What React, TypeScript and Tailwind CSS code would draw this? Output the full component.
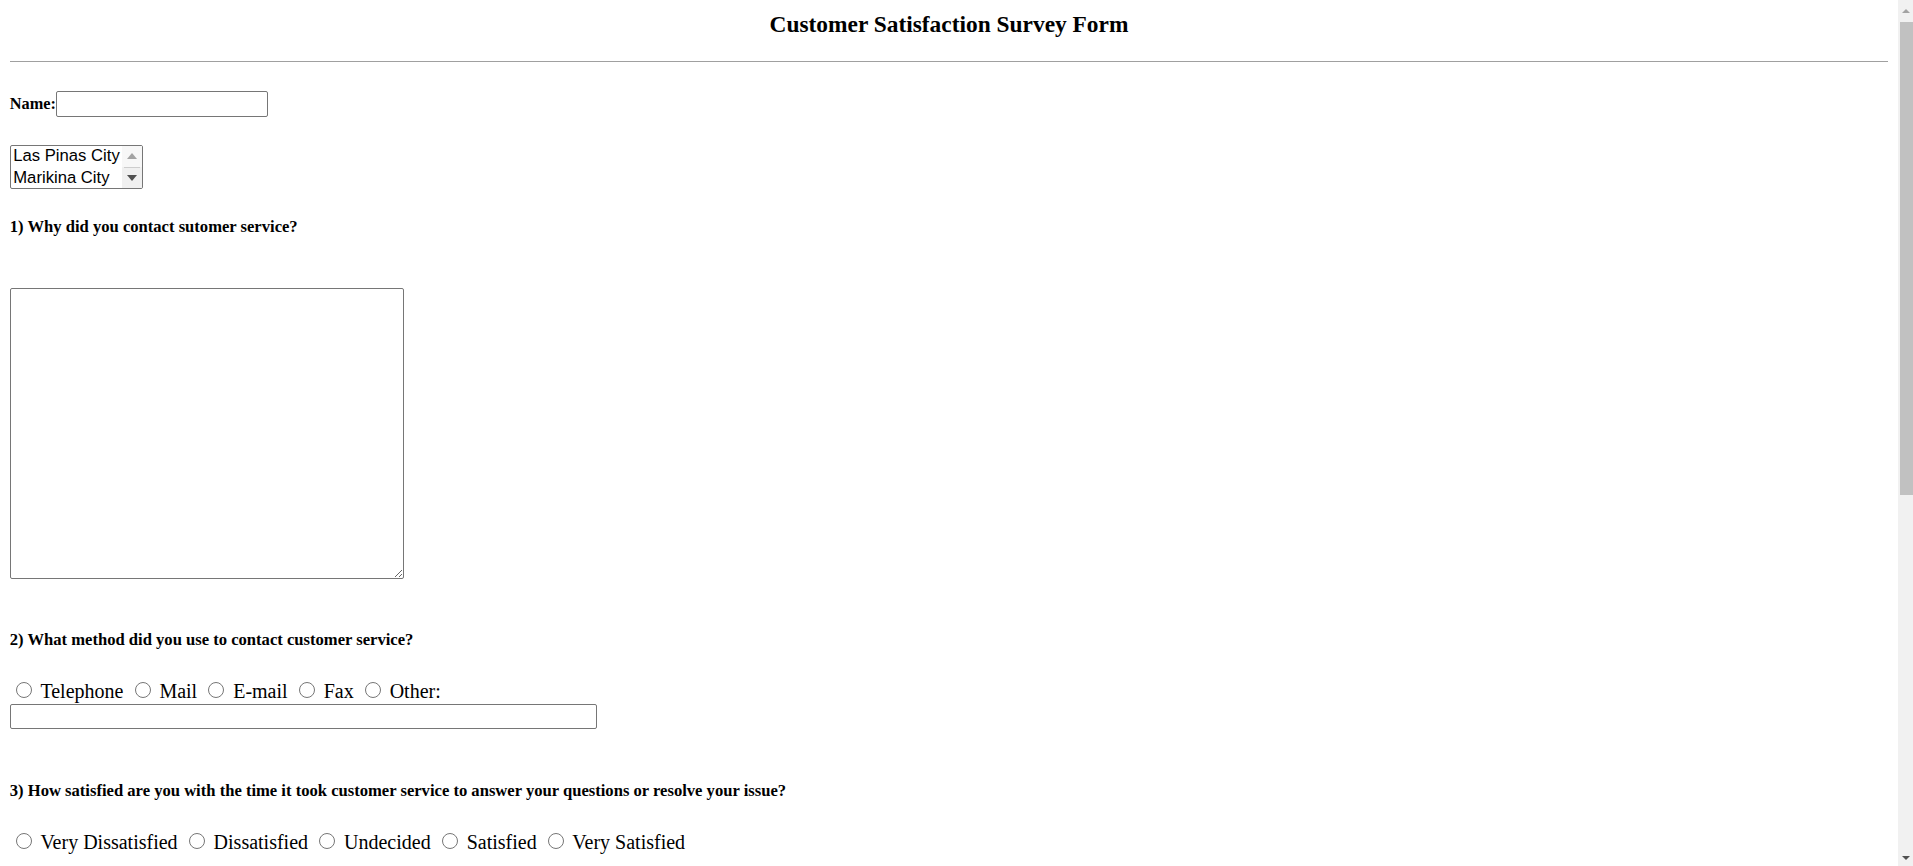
import { Fragment } from 'react';

const methods = ['Telephone', 'Mail', 'E-mail', 'Fax', 'Other:'];
const ratings = ['Very Dissatisfied', 'Dissatisfied', 'Undecided', 'Satisfied', 'Very Satisfied'];

function RadioLine({ name, options }: { name: string; options: string[] }) {
  return (
    <div className="h-[24px] text-[20px] leading-[22px]">
      {options.map((o) => (
        <Fragment key={o}>
          <input
            type="radio"
            name={name}
            className="ml-[6.25px] mr-[3.75px] mt-[3.75px] h-[16px] w-[16px]"
          />{' '}
          {o}{' '}
        </Fragment>
      ))}
    </div>
  );
}

function PageScrollbar() {
  return (
    <div aria-hidden className="flex h-full w-[15px] flex-col bg-[#f1f1f1]">
      <div className="flex h-[22px] items-center justify-center">
        <svg width="8" height="4" viewBox="0 0 8 4">
          <path d="M0 4 L4 0 L8 4z" fill="#a3a3a3" />
        </svg>
      </div>
      <div className="ml-[2px] h-[473px] bg-[#c1c1c1]" />
      <div className="flex-1" />
      <div className="flex h-[17px] items-center justify-center">
        <svg width="8" height="4" viewBox="0 0 8 4">
          <path d="M0 0 L8 0 L4 4z" fill="#505050" />
        </svg>
      </div>
    </div>
  );
}

export default function App() {
  return (
    <div className="flex h-screen overflow-hidden bg-white">
      <main className="min-w-0 flex-1 px-[9.76px] font-['Liberation_Serif',serif] text-black">
        {/* Title */}
        <h3 className="pt-[11.4px] text-center text-[23.4px] font-bold leading-[26px]">
          Customer Satisfaction Survey Form
        </h3>
        <hr className="mt-[23.6px] border-t border-[#a0a0a0]" />

        {/* Name */}
        <div className="mt-[29px] flex h-[26px] items-center">
          <label className="text-[16.3px] font-bold leading-[18px]">Name:</label>
          <input type="text" className="h-[26px] w-[212px] rounded-[2px] border border-[#767676] bg-white" />
        </div>

        {/* City list */}
        <div
          role="listbox"
          className="mt-[28px] flex h-[44.3px] w-[133.4px] overflow-hidden rounded-[2px] border border-[#767676] font-['Liberation_Sans',Arial,sans-serif] text-[16.67px]"
        >
          <div className="flex-1 pl-[2.5px]">
            <div className="h-[22px] leading-[19px]">Las Pinas City</div>
            <div className="h-[22px] leading-[19px]">Marikina City</div>
          </div>
          <div className="flex w-[20px] flex-col bg-[#f0f0f0]">
            <div className="flex flex-1 items-center justify-center bg-[#f7f7f7]">
              <svg width="10" height="6" viewBox="0 0 10 6">
                <path d="M0 6 L5 0 L10 6z" fill="#a3a3a3" />
              </svg>
            </div>
            <div className="mx-[2px] h-px bg-[#cdcdcd]" />
            <div className="flex flex-1 items-center justify-center">
              <svg width="10" height="6" viewBox="0 0 10 6">
                <path d="M0 0 L10 0 L5 6z" fill="#505050" />
              </svg>
            </div>
          </div>
        </div>

        {/* Question 1 */}
        <h5 className="mt-[29.2px] text-[16.6px] font-bold leading-[18px]">1) Why did you contact sutomer service?</h5>
        <textarea className="mt-[51.5px] block h-[291px] w-[394px] rounded-[2px] border border-[#767676]" />

        {/* Question 2 */}
        <h5 className="mt-[52.5px] text-[16.6px] font-bold leading-[18px]">
          2) What method did you use to contact customer service?
        </h5>
        <div className="mt-[29px]">
          <RadioLine name="method" options={methods} />
        </div>
        <input type="text" className="mt-[2px] block h-[25px] w-[587px] rounded-[2px] border border-[#767676] bg-white" />

        {/* Question 3 */}
        <h5 className="mt-[52.2px] text-[16.6px] font-bold leading-[18px]">
          3) How satisfied are you with the time it took customer service to answer your questions or resolve your
          issue?
        </h5>
        <div className="mt-[29.5px]">
          <RadioLine name="time" options={ratings} />
        </div>
      </main>
      <PageScrollbar />
    </div>
  );
}
